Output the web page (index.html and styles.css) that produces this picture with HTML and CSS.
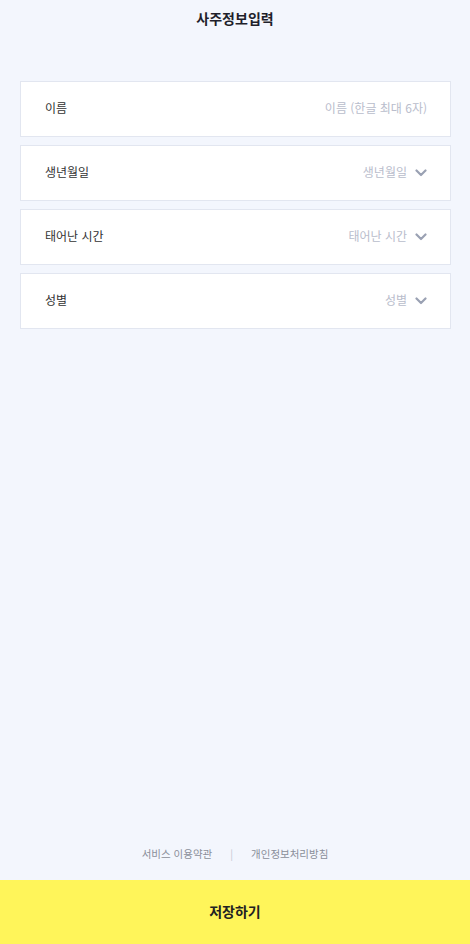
FILE: index.html
```html
<!DOCTYPE html>
<html lang="ko">
<head>
  <meta charset="utf-8">
  <title>사주정보입력</title>
  <link rel="stylesheet" href="styles.css">
</head>
<body>

  <div id="page">
    <header class="title">사주정보입력</header>

    <div class="form">
      <div class="row">
        <label>이름</label>
        <span class="value">이름 (한글 최대 6자)</span>
      </div>
      <div class="row">
        <label>생년월일</label>
        <span class="value">생년월일</span>
        <svg class="chevron" viewBox="0 0 12 8"><path d="M1.5 1.5 L6 6 L10.5 1.5"/></svg>
      </div>
      <div class="row">
        <label>태어난 시간</label>
        <span class="value">태어난 시간</span>
        <svg class="chevron" viewBox="0 0 12 8"><path d="M1.5 1.5 L6 6 L10.5 1.5"/></svg>
      </div>
      <div class="row">
        <label>성별</label>
        <span class="value">성별</span>
        <svg class="chevron" viewBox="0 0 12 8"><path d="M1.5 1.5 L6 6 L10.5 1.5"/></svg>
      </div>
    </div>

    <div class="links">
      <a>서비스 이용약관</a>
      <span class="bar">|</span>
      <a>개인정보처리방침</a>
    </div>

    <button class="save">저장하기</button>
  </div>

</body>
</html>
```

FILE: styles.css
```css
* {
  box-sizing: border-box;
}
html, body {
  margin: 0;
  height: 100%;
}
body {
  background-color: #f3f6fd;
  font-family: "Noto Sans CJK KR", "Noto Sans", sans-serif;
  color: #222;
}
#page {
  height: 944px;
  display: flex;
  flex-direction: column;
}
.title {
  height: 38px;
  padding-top: 8px;
  text-align: center;
  font-size: 14px;
  font-weight: bold;
  color: #1f1f2b;
}
.form {
  margin: 43px 19px 0 20px;
  display: flex;
  flex-direction: column;
  gap: 8px;
}
.row {
  height: 56px;
  background-color: #fff;
  border: 1px solid #e2e6f0;
  display: flex;
  align-items: center;
  padding: 0 23px 3px 24px;
  font-size: 12px;
}
.row label {
  flex: 1;
  color: #333;
}
.value {
  color: #b9bdcc;
}
.chevron {
  width: 12px;
  height: 8px;
  margin-left: 8px;
  margin-top: 2px;
  fill: none;
  stroke: #9aa1b3;
  stroke-width: 2.2;
  stroke-linecap: round;
  stroke-linejoin: round;
}
.links {
  margin-top: auto;
  height: 48px;
  display: flex;
  justify-content: center;
  gap: 18px;
  padding-top: 14px;
  font-size: 10.5px;
  color: #8a8e99;
}
.links .bar {
  color: #c5c9d3;
}
.save {
  height: 64px;
  border: none;
  padding-bottom: 3px;
  background-color: #fff55a;
  font-family: inherit;
  font-size: 14px;
  font-weight: bold;
  color: #222;
}
```
